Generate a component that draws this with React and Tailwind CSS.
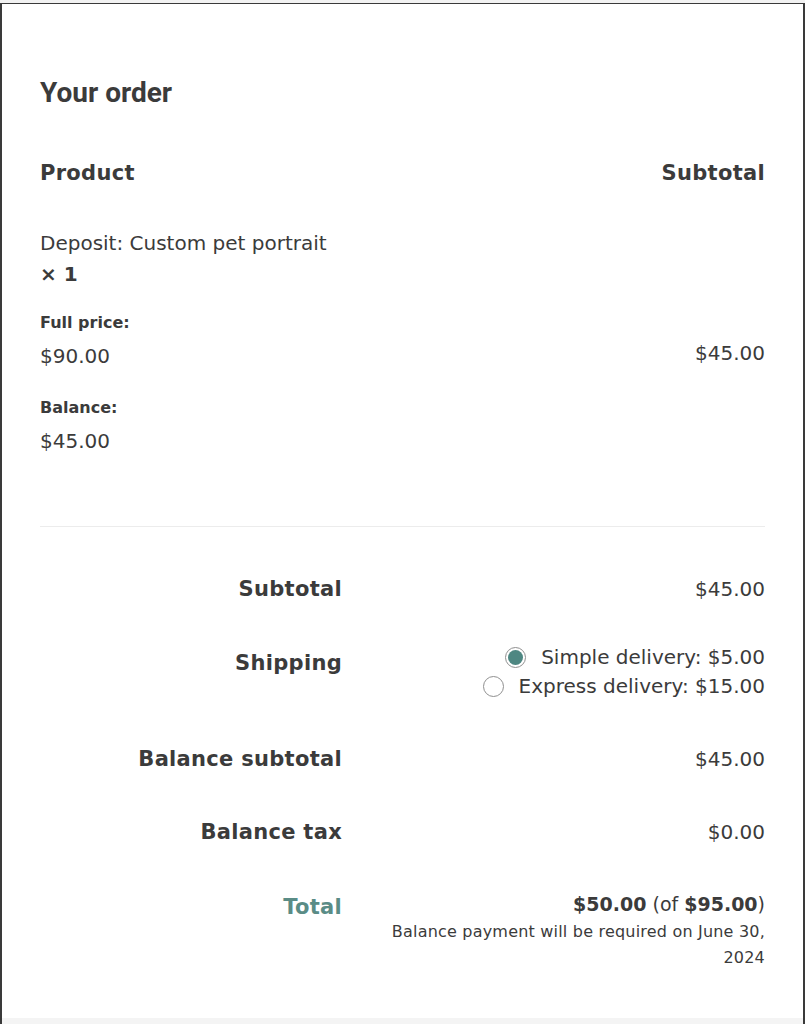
import React from 'react';

const font = { fontFamily: '"DejaVu Sans", "Liberation Sans", sans-serif' };

const Row = ({ label, labelClass = '', children, className = '' }) => (
    <div className={`flex items-start ${className}`}>
        <div className={`w-[302px] text-right text-[21px] leading-[28px] font-bold tracking-[0.3px] ${labelClass}`}>
            {label}
        </div>
        <div className="flex-1 text-right">{children}</div>
    </div>
);

const Radio = ({ checked }) => (
    <span className="w-[21px] h-[21px] rounded-full border border-[#8f8f8f] bg-white flex items-center justify-center shrink-0">
        {checked && <span className="w-[15px] h-[15px] rounded-full bg-[#4e8782]" />}
    </span>
);

export default function App() {
    return (
        <div className="h-[1024px] w-[805px] overflow-hidden bg-[#f2f2f2] pt-[3px]" style={font}>
            <div className="h-[1021px] w-[805px] border-l-2 border-r-2 border-t border-[#3a3a3a] flex flex-col">
                <div className="h-[1014px] bg-white px-[38px] text-[#3b3b3b] shrink-0">
                    {/* heading */}
                    <h2
                        className="pt-[73px] text-[28px] leading-[32px] font-bold"
                        style={{ fontFamily: 'Roboto, "Liberation Sans", sans-serif' }}
                    >
                        Your order
                    </h2>

                    {/* table head */}
                    <div className="mt-[50px] flex justify-between text-[21px] leading-[28px] font-bold tracking-[0.3px]">
                        <span>Product</span>
                        <span>Subtotal</span>
                    </div>

                    {/* product row */}
                    <div className="mt-[41px] flex justify-between text-[20px]">
                        <div>
                            <div className="leading-[31px]">Deposit: Custom pet portrait</div>
                            <div className="leading-[31px] font-bold">× 1</div>
                            <div className="mt-[21px] text-[16px] leading-[24px] font-bold">Full price:</div>
                            <div className="mt-[7px] leading-[28px]">$90.00</div>
                            <div className="mt-[26px] text-[16px] leading-[24px] font-bold">Balance:</div>
                            <div className="mt-[7px] leading-[28px]">$45.00</div>
                        </div>
                        <div className="pt-[111px] leading-[28px]">$45.00</div>
                    </div>

                    <div className="mt-[71px] h-px bg-[#ececec]" />

                    {/* totals */}
                    <div className="text-[20px] leading-[28px]">
                        <Row label="Subtotal" className="mt-[48px]">
                            $45.00
                        </Row>
                        <Row label="Shipping" className="mt-[40px]" labelClass="pt-[6px]">
                            <div className="flex flex-col items-end">
                                <label className="flex items-center gap-[15px] leading-[29px]">
                                    <Radio checked />
                                    <span>Simple delivery: $5.00</span>
                                </label>
                                <label className="flex items-center gap-[15px] leading-[29px]">
                                    <Radio />
                                    <span>Express delivery: $15.00</span>
                                </label>
                            </div>
                        </Row>
                        <Row label="Balance subtotal" className="mt-[44px]">
                            $45.00
                        </Row>
                        <Row label="Balance tax" className="mt-[45px]">
                            $0.00
                        </Row>
                        <Row label="Total" className="mt-[47px]" labelClass="text-[#5a8c86]">
                            <div className="-mt-[3px] text-[19px]">
                                <span className="font-bold">$50.00</span> (of <span className="font-bold">$95.00</span>)
                            </div>
                            <div className="pt-[1px] text-[16px] leading-[26px] tracking-[0.2px]">
                                Balance payment will be required on June 30,
                                <br />
                                2024
                            </div>
                        </Row>
                    </div>
                </div>
                <div className="flex-1 bg-[#f4f4f4]" />
            </div>
        </div>
    );
}
